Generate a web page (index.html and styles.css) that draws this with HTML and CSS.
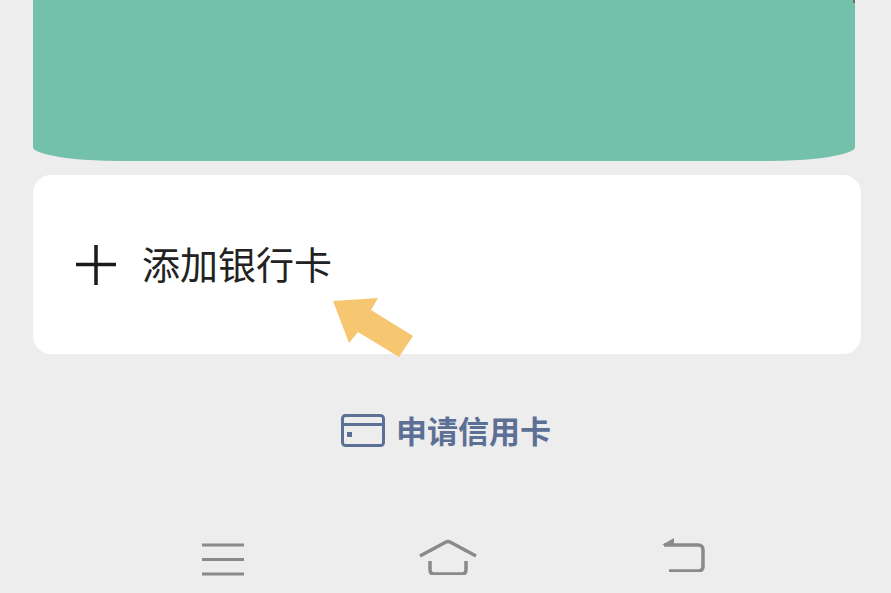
FILE: index.html
```html
<!DOCTYPE html>
<html lang="zh-CN">
<head>
<meta charset="utf-8">
<title>添加银行卡</title>
<link rel="stylesheet" href="styles.css">
</head>
<body>
<main class="page">
  <div class="bank-card"><span class="card-notch"></span></div>
  <section class="add-card">
    <svg class="plus" viewBox="0 0 40 40" width="40" height="40"><path d="M0 19.500H40M20 0V40"/></svg>
    <span class="add-label">添加银行卡</span>
    <svg class="pointer" viewBox="0 0 82 60" width="82" height="60"><path d="M0 3L45 0L38 12L80 38L66 59L25 34L16 45Z"/></svg>
  </section>
  <a class="apply">
    <svg class="apply-icon" viewBox="0 0 44 33" width="44" height="33"><rect x="1.500" y="1.500" width="41" height="30" rx="3"/><path d="M3 10.500H41"/><path class="dot" d="M6 18h5v5H6z"/></svg>
    <span>申请信用卡</span>
  </a>
  <nav class="nav">
    <svg class="nav-menu" viewBox="0 0 42 34" width="42" height="34"><path d="M0 3H42M0 17.500H42M0 32H42"/></svg>
    <svg class="nav-home" viewBox="0 0 58 36" width="58" height="36"><path d="M1 17L27 3Q29 2 31 3L57 17"/><path d="M11 22V31Q11 35 15 35H43Q47 35 47 31V22"/></svg>
    <svg class="nav-back" viewBox="0 0 44 34" width="44" height="34"><path d="M7 33H36Q41 33 41 28V12Q41 7 36 7H2"/><path class="head" d="M0 7L12 0V8Z"/></svg>
  </nav>
</main>
</body>
</html>
```
FILE: styles.css
```css
* { box-sizing: border-box; }
html, body { margin: 0; height: 100%; }
body {
  background: #ededed;
  font-family: "Noto Sans CJK SC", "Noto Sans", sans-serif;
  overflow: hidden;
}
.page { display: flex; flex-direction: column; height: 593px; padding-left: 33px; }
.bank-card {
  position: relative;
  flex: none;
  width: 822px;
  height: 161px;
  background: #73c1aa;
  border-radius: 0 0 90px 90px / 0 0 14px 14px;
  overflow: hidden;
}
.card-notch {
  position: absolute;
  top: -3px;
  right: -2px;
  width: 4px;
  height: 6px;
  background: #7d6a60;
}
.add-card {
  position: relative;
  flex: none;
  display: flex;
  align-items: center;
  width: 828px;
  height: 179px;
  margin-top: 14px;
  padding-left: 43px;
  background: #ffffff;
  border-radius: 18px;
}
.plus { flex: none; margin-top: 0; }
.plus path { fill: none; stroke: #1a1a1a; stroke-width: 3.5; }
.add-label {
  margin-left: 26px;
  margin-top: -4px;
  font-size: 38px;
  line-height: 1;
  color: #222222;
  white-space: nowrap;
}
.pointer { position: absolute; left: 300px; top: 123px; }
.pointer path { fill: #f6c670; }
.apply {
  display: flex;
  align-items: center;
  gap: 11px;
  margin-top: 60px;
  margin-left: 308px;
  height: 33px;
  font-size: 31px;
  font-weight: 700;
  line-height: 1;
  color: #5c7096;
  white-space: nowrap;
}
.apply span { margin-top: -3px; }
.apply-icon { flex: none; }
.apply-icon rect, .apply-icon path { fill: none; stroke: #5c7096; stroke-width: 3; }
.apply-icon .dot { fill: #5c7096; stroke: none; }
.nav {
  display: flex;
  align-items: flex-start;
  margin-top: 95px;
  padding-left: 169px;
}
.nav svg { flex: none; }
.nav path { fill: none; stroke: #8a8a8a; stroke-width: 3.5; }
.nav-menu path { stroke-width: 3; }
.nav-home { margin-left: 175px; margin-top: -3px; }
.nav-back { margin-left: 185px; margin-top: -4px; }
.nav .head { fill: #8a8a8a; stroke: none; }
```
